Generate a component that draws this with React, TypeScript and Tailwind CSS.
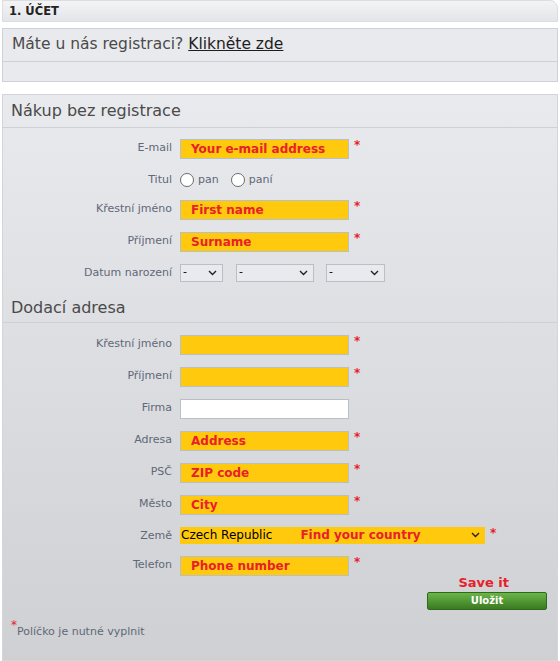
import { ReactNode } from "react";

function Chevron() {
  return (
    <svg width="9" height="6" viewBox="0 0 9 6" className="shrink-0">
      <path d="M1 1l3.5 3.5L8 1" fill="none" stroke="#222" strokeWidth="1.4" />
    </svg>
  );
}

function Row({ label, children, star = true, gap = "mb-3" }: { label: string; children: ReactNode; star?: boolean; gap?: string }) {
  return (
    <div className={`flex items-start ${gap}`}>
      <div className="w-[177px] pr-[8px] pt-[2px] text-right text-[11px] leading-[14px] text-[#5e6877]">{label}</div>
      {children}
      {star && <span className="ml-[5px] -mt-[1px] text-[12px] font-bold leading-[14px] text-[#e8202a]">*</span>}
    </div>
  );
}

function Field({ text, white = false }: { text?: string; white?: boolean }) {
  return (
    <div
      className={`flex h-[20px] w-[169px] items-center border border-[#b9bfc7] pl-[10px] text-[12px] font-bold text-[#e8202a] ${
        white ? "bg-white" : "bg-[#ffc90e]"
      }`}
    >
      {text}
    </div>
  );
}

function DateSelect({ w }: { w: string }) {
  return (
    <div className={`flex h-[18px] ${w} items-center justify-between border border-[#b9bfc7] bg-[#e9eaee] pl-[2px] pr-[5px] text-[11px] text-black`}>
      <span>-</span>
      <Chevron />
    </div>
  );
}

function Radio({ label }: { label: string }) {
  return (
    <div className="flex items-center gap-[4px]">
      <span className="h-[14px] w-[14px] rounded-full border border-[#6c6c6c] bg-white" />
      <span className="text-[11px] text-[#5e6877]">{label}</span>
    </div>
  );
}

export default function App() {
  return (
    <div className="min-h-[661px] w-[560px] bg-white font-['DejaVu_Sans',Verdana,sans-serif]">
      {/* step header */}
      <div className="mx-[2px] flex h-[22px] items-center rounded-tr-[8px] border border-[#dcdde1] bg-gradient-to-b from-[#f4f4f6] to-[#e4e5e9] pl-[6px] pt-[1px] text-[11.5px] font-bold text-[#222]">
        1. ÚČET
      </div>

      {/* login box */}
      <div className="mx-[2px] mt-[6px] border border-[#d0d1d5] bg-[#e9eaee]">
        <div className="flex h-[33px] items-center border-b border-[#cfd0d4] pl-[9px] text-[15.5px] text-[#4a4a4a]">
          Máte u nás registraci?&nbsp;<span className="text-[#1e1e1e] underline">Klikněte zde</span>
        </div>
        <div className="h-[19px]" />
      </div>

      {/* form */}
      <div className="mx-[2px] mt-[12px] min-h-[567px] border border-[#d4d5d9] bg-gradient-to-b from-[#e9eaee] to-[#cfd0d4]">
        <div className="flex h-[33px] items-center border-b border-[#cfd0d4] pl-[8px] text-[16px] text-[#4a4a4a]">
          Nákup bez registrace
        </div>
        <div className="pt-[11px]">
          <Row label="E-mail"><Field text="Your e-mail address" /></Row>
          <Row label="Titul" star={false} gap="mb-[11px]">
            <div className="flex gap-[12px] pt-[1px]">
              <Radio label="pan" />
              <Radio label="paní" />
            </div>
          </Row>
          <Row label="Křestní jméno"><Field text="First name" /></Row>
          <Row label="Příjmení"><Field text="Surname" /></Row>
          <Row label="Datum narození" star={false} gap="mb-0">
            <div className="flex">
              <DateSelect w="w-[43px]" />
              <div className="ml-[13px]"><DateSelect w="w-[78px]" /></div>
              <div className="ml-[12px]"><DateSelect w="w-[59px]" /></div>
            </div>
          </Row>
        </div>

        <div className="mt-[13px] flex h-[28px] items-center border-b border-[#cfd0d4] pl-[8px] text-[16px] text-[#4a4a4a]">
          Dodací adresa
        </div>
        <div className="pt-[12px]">
          <Row label="Křestní jméno"><Field /></Row>
          <Row label="Příjmení"><Field /></Row>
          <Row label="Firma" star={false}><Field white /></Row>
          <Row label="Adresa"><Field text="Address" /></Row>
          <Row label="PSČ"><Field text="ZIP code" /></Row>
          <Row label="Město"><Field text="City" /></Row>
          <Row label="Země">
            <div className="flex h-[17px] w-[305px] items-center bg-[#ffc90e] pl-[1px] pr-[5px] text-[12px]">
              <span className="text-black">Czech Republic</span>
              <span className="ml-[28px] font-bold text-[#e8202a]">Find your country</span>
              <span className="ml-auto"><Chevron /></span>
            </div>
          </Row>
          <Row label="Telefon" gap="mb-0"><Field text="Phone number" /></Row>
        </div>

        <div className="flex flex-col items-end pr-[10px]">
          <div className="mr-[38px] text-[13px] font-bold leading-[14px] text-[#e8202a]">Save it</div>
          <button className="mt-[2px] h-[18px] w-[120px] rounded-[2px] border border-[#2f6a1c] bg-gradient-to-b from-[#6ab648] to-[#3b7a20] text-[10px] font-bold text-white">
            Uložit
          </button>
        </div>

        <div className="mt-[14px] pl-[8px] text-[11px] text-[#5e6877]">
          <sup className="text-[12px] text-[#e8202a]">*</sup>Políčko je nutné vyplnit
        </div>
      </div>
    </div>
  );
}
